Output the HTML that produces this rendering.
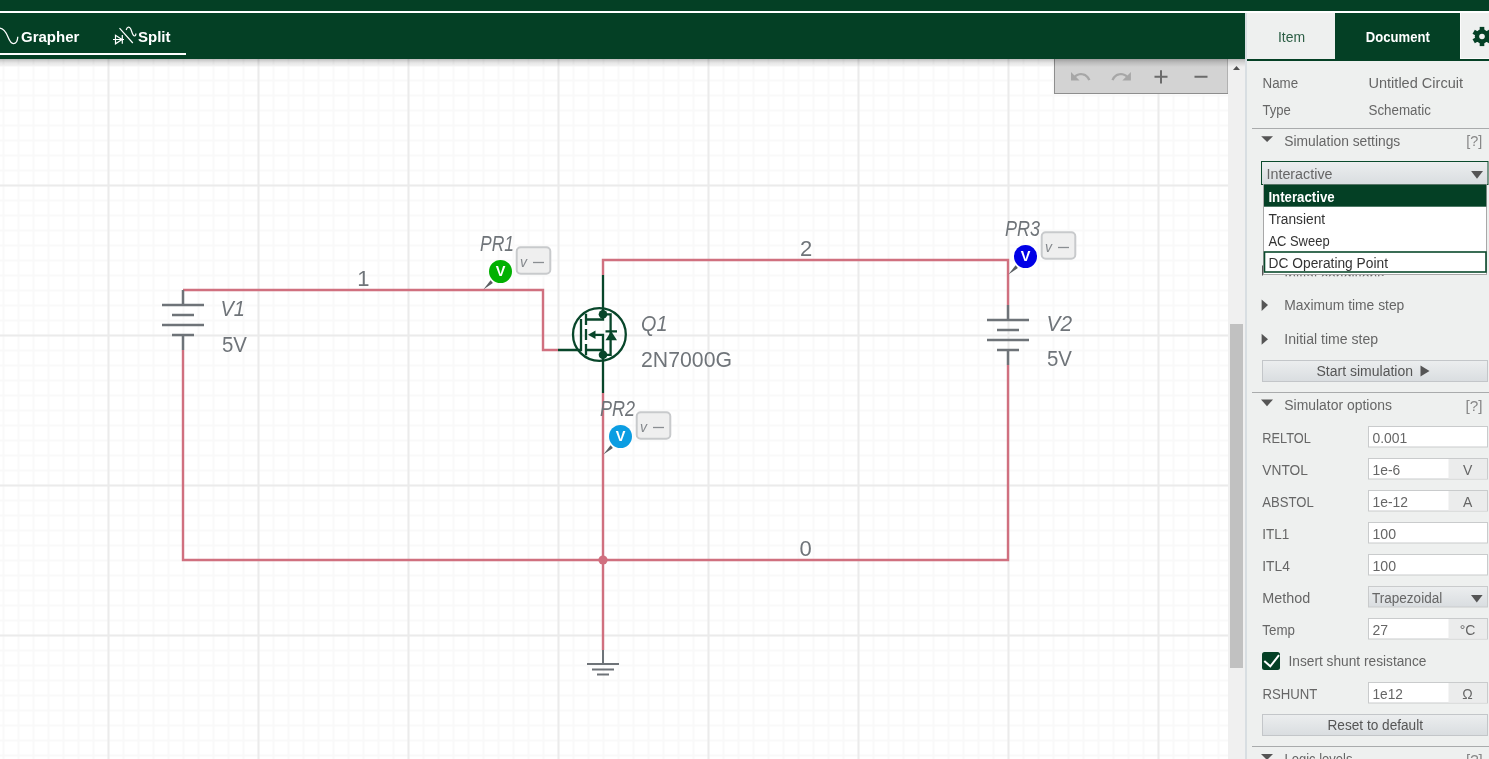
<!DOCTYPE html>
<html><head><meta charset="utf-8">
<style>
html,body{margin:0;padding:0;width:1489px;height:759px;overflow:hidden;background:#fff}
svg{display:block;will-change:transform}
text{font-family:"Liberation Sans",sans-serif}
</style></head><body>
<svg width="1489" height="759" viewBox="0 0 1489 759">
<defs>
<pattern id="minor" x="2" y="4" width="15" height="15" patternUnits="userSpaceOnUse">
<path d="M1.5 0V15M0 1.5H15" stroke="#f9f9f9" stroke-width="2" fill="none"/>
</pattern>
<pattern id="major" x="107" y="34" width="150" height="150" patternUnits="userSpaceOnUse">
<path d="M1.5 0V150M0 1.5H150" stroke="#ebebeb" stroke-width="2" fill="none"/>
</pattern>
<linearGradient id="shadow" x1="0" y1="0" x2="0" y2="1">
<stop offset="0" stop-color="#000" stop-opacity="0.25"/>
<stop offset="0.4" stop-color="#000" stop-opacity="0.12"/>
<stop offset="1" stop-color="#000" stop-opacity="0"/>
</linearGradient>
<linearGradient id="btn" x1="0" y1="0" x2="0" y2="1">
<stop offset="0" stop-color="#eceeef"/>
<stop offset="1" stop-color="#d9dde0"/>
</linearGradient>
</defs>
<!-- canvas -->
<rect x="0" y="0" width="1228" height="759" fill="#fff"/>
<rect x="0" y="0" width="1228" height="759" fill="url(#minor)"/>
<rect x="0" y="0" width="1228" height="759" fill="url(#major)"/>
<g id="circuit"><g fill="none" stroke-linecap="butt" stroke-linejoin="miter">
<path d="M183 290H543V350H558M603 275V260H1008V305M183 350V560H1008V365M603 393V650" stroke="#d0707f" stroke-width="2.4"/>
<circle cx="603" cy="560" r="4.6" fill="#d0707f" stroke="none"/>
<path d="M183 290V305M162 305H204M172 315H194M162 325H204M172 335H194M183 335V350" stroke="#6e7378" stroke-width="2.5"/>
<path d="M1008 305V320M987 320H1029M997 330H1019M987 340H1029M997 350H1019M1008 350V365" stroke="#6e7378" stroke-width="2.5"/>
<path d="M603 650V664M587 664H619M592 669.5H614M597 674.5H609" stroke="#6e7378" stroke-width="2"/>
<g stroke="#08462a" stroke-width="2.3">
<circle cx="599.4" cy="334.5" r="26.4"/>
<path d="M603 275V319.5H586.5M558 350H581V319M586 313.8V325M586 329V340M586 344V355.3M595 334.8H603V355M586.5 350H603M603 355V393M603 314.3H610.6V354.8H603M605.5 331.3H617"/>
</g>
<g fill="#08462a" stroke="none">
<circle cx="603" cy="314.3" r="4.3"/><circle cx="603" cy="354.8" r="4.3"/>
<path d="M588 334.7L595.5 330.5V339Z"/>
<path d="M611.2 331.3L605.5 340.2H617Z"/>
</g>
</g>
<g font-size="22" fill="#6f7479">
<text x="220.5" y="316" font-style="italic" textLength="24.5" lengthAdjust="spacingAndGlyphs">V1</text>
<text x="222" y="351.6" textLength="25" lengthAdjust="spacingAndGlyphs">5V</text>
<text x="1046.5" y="331" font-style="italic" textLength="25.5" lengthAdjust="spacingAndGlyphs">V2</text>
<text x="1047" y="366.4" textLength="25" lengthAdjust="spacingAndGlyphs">5V</text>
<text x="641" y="331.3" font-style="italic" textLength="26.4" lengthAdjust="spacingAndGlyphs">Q1</text>
<text x="641" y="366.5" textLength="91" lengthAdjust="spacingAndGlyphs">2N7000G</text>
<text x="357.3" y="285.5">1</text>
<text x="800" y="255.9">2</text>
<text x="799.5" y="555.6">0</text>
</g>
<g transform="translate(0,0)"><path d="M483.4 289.6L490.6 280.3L492.9 282.9Z" fill="#5a5e62"/><circle cx="500.5" cy="271.5" r="11.5" fill="#02b102"/><text x="500.6" y="276.4" font-size="14.5" font-weight="bold" fill="#fff" text-anchor="middle">V</text><text x="480" y="251" font-size="22" font-style="italic" fill="#6f7479" textLength="34" lengthAdjust="spacingAndGlyphs">PR1</text><rect x="516.7" y="247.2" width="33.6" height="26.6" rx="4" fill="#efefef" stroke="#c8cacc" stroke-width="2"/><text x="520" y="267.2" font-size="14" font-style="italic" fill="#85898d">v</text><path d="M533 262.5H544" stroke="#8a8e92" stroke-width="1.3"/></g><g transform="translate(120,165)"><path d="M483.4 289.6L490.6 280.3L492.9 282.9Z" fill="#5a5e62"/><circle cx="500.5" cy="271.5" r="11.5" fill="#0b9de2"/><text x="500.6" y="276.4" font-size="14.5" font-weight="bold" fill="#fff" text-anchor="middle">V</text><text x="480" y="251" font-size="22" font-style="italic" fill="#6f7479" textLength="35" lengthAdjust="spacingAndGlyphs">PR2</text><rect x="516.7" y="247.2" width="33.6" height="26.6" rx="4" fill="#efefef" stroke="#c8cacc" stroke-width="2"/><text x="520" y="267.2" font-size="14" font-style="italic" fill="#85898d">v</text><path d="M533 262.5H544" stroke="#8a8e92" stroke-width="1.3"/></g><g transform="translate(525,-15)"><path d="M483.4 289.6L490.6 280.3L492.9 282.9Z" fill="#5a5e62"/><circle cx="500.5" cy="271.5" r="11.5" fill="#0000e6"/><text x="500.6" y="276.4" font-size="14.5" font-weight="bold" fill="#fff" text-anchor="middle">V</text><text x="480" y="251" font-size="22" font-style="italic" fill="#6f7479" textLength="35" lengthAdjust="spacingAndGlyphs">PR3</text><rect x="516.7" y="247.2" width="33.6" height="26.6" rx="4" fill="#efefef" stroke="#c8cacc" stroke-width="2"/><text x="520" y="267.2" font-size="14" font-style="italic" fill="#85898d">v</text><path d="M533 262.5H544" stroke="#8a8e92" stroke-width="1.3"/></g></g>
<!-- toolbar -->
<g id="toolbar"><rect x="1054.5" y="58" width="173.5" height="35.5" fill="#d3d3d3" stroke="#8e8e8e" stroke-width="1"/>
<g fill="#a7a7a7" transform="translate(1069.1,65.35) scale(0.95)"><path d="M12.5 8c-2.65 0-5.05.99-6.9 2.6L2 7v9h9l-3.62-3.62c1.39-1.16 3.16-1.88 5.12-1.88 3.540 0 6.55 2.31 7.6 5.5l2.37-.78C21.08 11.03 17.15 8 12.5 8z"/></g>
<g fill="#a7a7a7" transform="translate(1132.8,65.35) scale(-0.95,0.95)"><path d="M12.5 8c-2.65 0-5.05.99-6.9 2.6L2 7v9h9l-3.62-3.62c1.39-1.16 3.16-1.88 5.12-1.88 3.540 0 6.55 2.31 7.6 5.5l2.37-.78C21.08 11.03 17.15 8 12.5 8z"/></g>
<path d="M1154.5 76.8H1167.5M1161 70.2V83.4M1194.5 76.8H1207.5" stroke="#6b6b6b" stroke-width="2"/>
</g>
<!-- scrollbar -->
<rect x="1228" y="59" width="17" height="700" fill="#f0f0f0"/>
<rect x="1230" y="324" width="13" height="344" fill="#c1c1c1"/>
<path d="M1233 70H1240L1236.5 66Z" fill="#505050"/>
<!-- header -->
<rect x="0" y="0" width="1489" height="59" fill="#044025"/>
<rect x="0" y="11" width="1489" height="2" fill="#fff"/>
<rect x="0" y="59" width="1245" height="8" fill="url(#shadow)"/>
<rect x="0" y="53" width="186" height="2" fill="#fff"/>
<path d="M-1 28.2C3 27.6 5.5 31 8 37C10 42 11.5 43.6 13.5 43.6C16 43.6 17.6 40.5 17.8 36.8" stroke="#fff" stroke-width="1.3" fill="none"/>
<g stroke="#fff" stroke-width="1.2" fill="none">
<path d="M113 39.5H124M115.5 35.3V43.8L122 39.5ZM122.3 35V43.8M119.5 28.1L132.8 43"/>
<path d="M126.2 30C127 27 129 26 130.5 28.5C132 31.5 132.5 36 134.5 36C135.5 36 136 35 135.8 33.5"/>
</g>
<text x="21" y="42" font-size="15" font-weight="bold" fill="#fff">Grapher</text>
<text x="138" y="42" font-size="15" font-weight="bold" fill="#fff">Split</text>
<!-- panel -->
<rect x="1245" y="13" width="244" height="746" fill="#eef0ef"/>
<rect x="1245" y="13" width="2" height="746" fill="#d8dee2"/>
<g id="panel">
<rect x="1335" y="13" width="125" height="46" fill="#044025"/>
<rect x="1460" y="13" width="1" height="46" fill="#fbfbfb"/>
<rect x="1460" y="58" width="29" height="1" fill="#fbfbfb"/>
<rect x="1247" y="59" width="242" height="2" fill="#044025"/>
<text x="1277.9" y="42" font-size="14" fill="#2d5f46" textLength="27.2" lengthAdjust="spacingAndGlyphs">Item</text>
<text x="1365.8" y="42" font-size="14" font-weight="bold" fill="#fff" textLength="64" lengthAdjust="spacingAndGlyphs">Document</text>
<g transform="translate(1482,36.5)" fill="#044025">
<circle r="7.2"/>
<rect x="-2.3" y="-9.6" width="4.6" height="19.2"/>
<rect x="-2.3" y="-9.6" width="4.6" height="19.2" transform="rotate(60)"/>
<rect x="-2.3" y="-9.6" width="4.6" height="19.2" transform="rotate(120)"/>
<circle r="2.8" fill="#eef0ef"/>
</g>
<g font-size="14" fill="#666">
<text x="1262.5" y="87.7" textLength="35.6" lengthAdjust="spacingAndGlyphs">Name</text>
<text x="1262.5" y="114.7" textLength="28.3" lengthAdjust="spacingAndGlyphs">Type</text>
<text x="1368.5" y="87.6" textLength="94.5" lengthAdjust="spacingAndGlyphs">Untitled Circuit</text>
<text x="1368.5" y="114.7" textLength="62.4" lengthAdjust="spacingAndGlyphs">Schematic</text>
</g>
<rect x="1252" y="128" width="237" height="1" fill="#a9abac"/>
<path d="M1261.2 136.2H1273L1267.1 142Z" fill="#555"/>
<g font-size="14" fill="#666">
<text x="1284.3" y="145.6" textLength="116" lengthAdjust="spacingAndGlyphs">Simulation settings</text>
<text x="1466.2" y="145.6" textLength="16.1" lengthAdjust="spacingAndGlyphs" font-size="15" fill="#888">[?]</text>
</g>
<!-- partially hidden rows -->
<path d="M1262 265L1268 270.5L1262 276Z" fill="#555"/>
<text x="1284.3" y="282" font-size="14" fill="#666" textLength="100" lengthAdjust="spacingAndGlyphs">Initial conditions</text>
<rect x="1250" y="276.3" width="239" height="16" fill="#eef0ef"/>
<path d="M1261.6 299.4L1268 305.1L1261.6 310.9Z" fill="#555"/>
<path d="M1261.6 333.7L1268 339.3L1261.6 344.8Z" fill="#555"/>
<g font-size="14" fill="#666">
<text x="1284.3" y="310.2" textLength="120" lengthAdjust="spacingAndGlyphs">Maximum time step</text>
<text x="1284.3" y="344" textLength="93.8" lengthAdjust="spacingAndGlyphs">Initial time step</text>
</g>
<rect x="1262.5" y="360.5" width="225" height="21" fill="url(#btn)" stroke="#c3c6c9" stroke-width="1"/>
<text x="1316.5" y="375.7" font-size="14" fill="#555" textLength="96.5" lengthAdjust="spacingAndGlyphs">Start simulation</text>
<path d="M1420.5 365.4L1429.5 371L1420.5 376.5Z" fill="#555"/>
<rect x="1252" y="392" width="237" height="1" fill="#a9abac"/>
<path d="M1261 399.6H1273L1267 406.2Z" fill="#555"/>
<g font-size="14" fill="#666">
<text x="1284.3" y="410" textLength="107.6" lengthAdjust="spacingAndGlyphs">Simulator options</text>
<text x="1465.5" y="411" textLength="17.1" lengthAdjust="spacingAndGlyphs" font-size="15" fill="#888">[?]</text>
<text x="1262.3" y="443.1" textLength="48.5" lengthAdjust="spacingAndGlyphs">RELTOL</text>
<text x="1262.3" y="475.1" textLength="45.6" lengthAdjust="spacingAndGlyphs">VNTOL</text>
<text x="1262.3" y="507.1" textLength="51.4" lengthAdjust="spacingAndGlyphs">ABSTOL</text>
<text x="1262.3" y="539.1" textLength="27" lengthAdjust="spacingAndGlyphs">ITL1</text>
<text x="1262.3" y="571.1" textLength="27.5" lengthAdjust="spacingAndGlyphs">ITL4</text>
<text x="1262.3" y="603.1" textLength="48" lengthAdjust="spacingAndGlyphs">Method</text>
<text x="1262.3" y="635.1" textLength="32.6" lengthAdjust="spacingAndGlyphs">Temp</text>
<text x="1262.5" y="699" textLength="54.9" lengthAdjust="spacingAndGlyphs">RSHUNT</text>
<rect x="1368.5" y="426.5" width="119" height="20.5" fill="#fff" stroke="#c9cbcc" stroke-width="1"/><text x="1372.5" y="442.8" textLength="34.8" lengthAdjust="spacingAndGlyphs" fill="#666">0.001</text>
<rect x="1368.5" y="458.5" width="119" height="20.5" fill="#fff" stroke="#c9cbcc" stroke-width="1"/><rect x="1448.5" y="459" width="38.5" height="19.5" fill="#ebecec"/><text x="1467.6" y="474.8" text-anchor="middle" fill="#666">V</text><text x="1372.5" y="474.8" textLength="27.7" lengthAdjust="spacingAndGlyphs" fill="#666">1e-6</text>
<rect x="1368.5" y="490.5" width="119" height="20.5" fill="#fff" stroke="#c9cbcc" stroke-width="1"/><rect x="1448.5" y="491" width="38.5" height="19.5" fill="#ebecec"/><text x="1467.6" y="506.8" text-anchor="middle" fill="#666">A</text><text x="1372.5" y="506.8" textLength="35.5" lengthAdjust="spacingAndGlyphs" fill="#666">1e-12</text>
<rect x="1368.5" y="522.5" width="119" height="20.5" fill="#fff" stroke="#c9cbcc" stroke-width="1"/><text x="1372.5" y="538.8" textLength="23.6" lengthAdjust="spacingAndGlyphs" fill="#666">100</text>
<rect x="1368.5" y="554.5" width="119" height="20.5" fill="#fff" stroke="#c9cbcc" stroke-width="1"/><text x="1372.5" y="570.8" textLength="23.6" lengthAdjust="spacingAndGlyphs" fill="#666">100</text>
<rect x="1368.5" y="618.5" width="119" height="20.5" fill="#fff" stroke="#c9cbcc" stroke-width="1"/><rect x="1448.5" y="619" width="38.5" height="19.5" fill="#ebecec"/><text x="1467.6" y="634.8" text-anchor="middle" fill="#666">°C</text><text x="1372.5" y="634.8" textLength="15.6" lengthAdjust="spacingAndGlyphs" fill="#666">27</text>
<rect x="1368.5" y="682.5" width="119" height="20.5" fill="#fff" stroke="#c9cbcc" stroke-width="1"/><rect x="1448.5" y="683" width="38.5" height="19.5" fill="#ebecec"/><text x="1467.6" y="698.8" text-anchor="middle" fill="#666">Ω</text><text x="1372.5" y="698.8" textLength="30.5" lengthAdjust="spacingAndGlyphs" fill="#666">1e12</text>
</g>
<rect x="1368.5" y="586.5" width="119" height="20.5" fill="url(#btn)" stroke="#c9cbcc" stroke-width="1"/>
<text x="1372" y="603" font-size="14" fill="#666" textLength="70.2" lengthAdjust="spacingAndGlyphs">Trapezoidal</text>
<path d="M1471 595H1482.6L1476.8 602.4Z" fill="#555"/>
<rect x="1262" y="652" width="18" height="18" rx="2.5" fill="#044025"/>
<path d="M1264.3 661L1270.3 666.3L1279 655.2" stroke="#fff" stroke-width="2" fill="none"/>
<text x="1288.5" y="665.8" font-size="14" fill="#666" textLength="138" lengthAdjust="spacingAndGlyphs">Insert shunt resistance</text>
<rect x="1262.5" y="714.5" width="225" height="21" fill="url(#btn)" stroke="#c3c6c9" stroke-width="1"/>
<text x="1327.5" y="730.3" font-size="14" fill="#555" textLength="95.5" lengthAdjust="spacingAndGlyphs">Reset to default</text>
<rect x="1252" y="746" width="237" height="1" fill="#a9abac"/>
<path d="M1261 754H1273L1267 760Z" fill="#555"/>
<text x="1284.5" y="763.7" font-size="14" fill="#666" textLength="68" lengthAdjust="spacingAndGlyphs">Logic levels</text>
<text x="1466" y="765" font-size="15" fill="#888" textLength="16.7" lengthAdjust="spacingAndGlyphs">[?]</text>
<!-- select -->
<rect x="1261.5" y="161.5" width="226.5" height="23" fill="url(#btn)" stroke="#0b4a2c" stroke-width="1"/>
<text x="1266.5" y="179" font-size="14" fill="#666" textLength="66" lengthAdjust="spacingAndGlyphs">Interactive</text>
<path d="M1471.1 171H1483L1477 178.7Z" fill="#555"/>
<!-- dropdown -->
<rect x="1263.5" y="184.5" width="223" height="90" fill="#fff" stroke="#a8a8a8" stroke-width="1"/>
<rect x="1264" y="184.5" width="222.3" height="22.2" fill="#044025"/>
<rect x="1264.5" y="252" width="221.5" height="20" fill="none" stroke="#0b4a2c" stroke-width="1.6"/>
<g font-size="14" fill="#333">
<text x="1268.4" y="201.7" textLength="66.3" lengthAdjust="spacingAndGlyphs" font-weight="bold" fill="#fff">Interactive</text>
<text x="1268.4" y="224.4" textLength="56.7" lengthAdjust="spacingAndGlyphs">Transient</text>
<text x="1268.4" y="245.8" textLength="61.2" lengthAdjust="spacingAndGlyphs">AC Sweep</text>
<text x="1268.6" y="267.7" textLength="119.4" lengthAdjust="spacingAndGlyphs">DC Operating Point</text>
</g>
</g>
</svg>
</body></html>
